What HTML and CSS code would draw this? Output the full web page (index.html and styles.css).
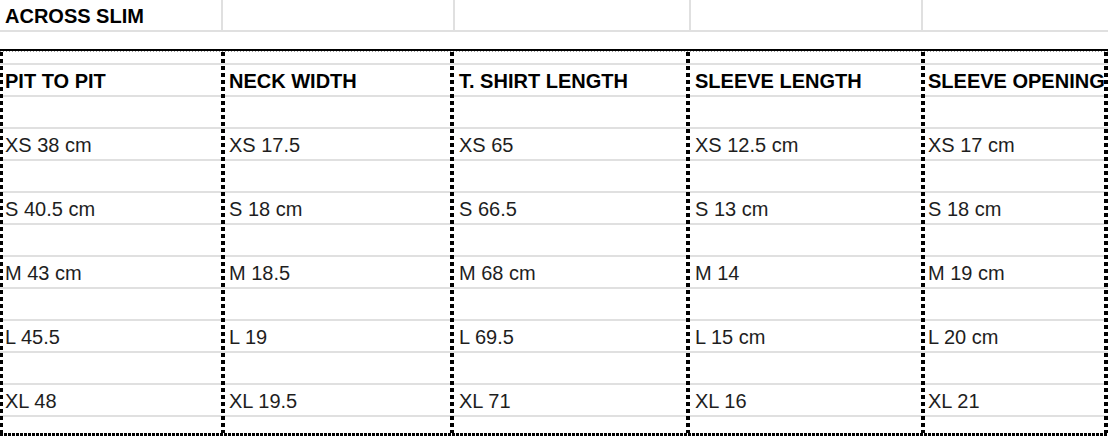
FILE: index.html
```html
<!DOCTYPE html>
<html>
<head>
<meta charset="utf-8">
<link rel="stylesheet" href="styles.css">
</head>
<body>
<div class="sheet">
  <div class="title-row">
    <div class="tcell t1">ACROSS SLIM</div>
    <div class="tcell t2"></div>
    <div class="tcell t3"></div>
    <div class="tcell t4"></div>
    <div class="tcell t5"></div>
  </div>
  <div class="gap"></div>
  <div class="table">
    <div class="top-rule"></div>
    <div class="cols">
      <div class="col c1">
        <div class="cell spacer"></div>
        <div class="cell head">PIT TO PIT</div>
        <div class="cell"></div>
        <div class="cell">XS 38 cm</div>
        <div class="cell"></div>
        <div class="cell">S 40.5 cm</div>
        <div class="cell"></div>
        <div class="cell">M 43 cm</div>
        <div class="cell"></div>
        <div class="cell">L 45.5</div>
        <div class="cell"></div>
        <div class="cell">XL 48</div>
        <div class="cell foot"></div>
      </div>
      <div class="col c2">
        <div class="cell spacer"></div>
        <div class="cell head">NECK WIDTH</div>
        <div class="cell"></div>
        <div class="cell">XS 17.5</div>
        <div class="cell"></div>
        <div class="cell">S 18 cm</div>
        <div class="cell"></div>
        <div class="cell">M 18.5</div>
        <div class="cell"></div>
        <div class="cell">L 19</div>
        <div class="cell"></div>
        <div class="cell">XL 19.5</div>
        <div class="cell foot"></div>
      </div>
      <div class="col c3">
        <div class="cell spacer"></div>
        <div class="cell head">T. SHIRT LENGTH</div>
        <div class="cell"></div>
        <div class="cell">XS 65</div>
        <div class="cell"></div>
        <div class="cell">S 66.5</div>
        <div class="cell"></div>
        <div class="cell">M 68 cm</div>
        <div class="cell"></div>
        <div class="cell">L 69.5</div>
        <div class="cell"></div>
        <div class="cell">XL 71</div>
        <div class="cell foot"></div>
      </div>
      <div class="col c4">
        <div class="cell spacer"></div>
        <div class="cell head">SLEEVE LENGTH</div>
        <div class="cell"></div>
        <div class="cell">XS 12.5 cm</div>
        <div class="cell"></div>
        <div class="cell">S 13 cm</div>
        <div class="cell"></div>
        <div class="cell">M 14</div>
        <div class="cell"></div>
        <div class="cell">L 15 cm</div>
        <div class="cell"></div>
        <div class="cell">XL 16</div>
        <div class="cell foot"></div>
      </div>
      <div class="col c5">
        <div class="cell spacer"></div>
        <div class="cell head">SLEEVE OPENING</div>
        <div class="cell"></div>
        <div class="cell">XS 17 cm</div>
        <div class="cell"></div>
        <div class="cell">S 18 cm</div>
        <div class="cell"></div>
        <div class="cell">M 19 cm</div>
        <div class="cell"></div>
        <div class="cell">L 20 cm</div>
        <div class="cell"></div>
        <div class="cell">XL 21</div>
        <div class="cell foot"></div>
      </div>
    </div>
    <div class="bottom-rule"></div>
  </div>
</div>
</body>
</html>
```
FILE: styles.css
```css
html, body {
  margin: 0;
  padding: 0;
  background: #fff;
}
body {
  font-family: "Liberation Sans", Arial, sans-serif;
  font-size: 20px;
  color: #1e1e1e;
  width: 1108px;
  height: 438px;
  overflow: hidden;
}
.sheet {
  display: flex;
  flex-direction: column;
  width: 1108px;
}
.title-row {
  display: flex;
  height: 32px;
  border-bottom: 2px solid #e0e0e0;
  box-sizing: border-box;
}
.tcell {
  box-sizing: border-box;
  height: 30px;
  border-right: 2px solid #e0e0e0;
  display: flex;
  align-items: flex-end;
  padding-bottom: 2px;
  white-space: nowrap;
}
.t1 { width: 223px; padding-left: 5px; font-weight: bold; color: #000; }
.t2 { width: 232px; }
.t3 { width: 236px; }
.t4 { width: 232px; }
.t5 { flex: 1; border-right: none; }
.gap {
  height: 17px;
}
.table {
  display: flex;
  flex-direction: column;
}
.top-rule {
  height: 3px;
  background:
    linear-gradient(#000, #000) top left / 100% 2px no-repeat,
    repeating-linear-gradient(90deg, #9a9a9a 0 1px, transparent 1px 3px) bottom left / 100% 1px no-repeat;
}
.cols {
  display: flex;
}
.col {
  position: relative;
  display: flex;
  flex-direction: column;
  box-sizing: border-box;
}
.col::before {
  content: "";
  position: absolute;
  left: 0;
  top: 0;
  bottom: 0;
  width: 4px;
  background: repeating-linear-gradient(to bottom, #000 0 4px, transparent 4px 7px);
}
.c1::before { width: 3px; }
.c5::after {
  content: "";
  position: absolute;
  right: 0;
  top: 0;
  bottom: 0;
  width: 4px;
  background: repeating-linear-gradient(to bottom, #000 0 4px, transparent 4px 7px);
}
.c1 { width: 221px; }
.c2 { width: 229px; }
.c3 { width: 236px; }
.c4 { width: 235px; }
.c5 { width: 187px; }
.cell {
  box-sizing: border-box;
  height: 32px;
  border-bottom: 2px solid #e0e0e0;
  display: flex;
  align-items: flex-end;
  padding-bottom: 3px;
  white-space: nowrap;
  line-height: 22px;
}
.c1 .cell { padding-left: 5px; }
.c2 .cell { padding-left: 8px; }
.c3 .cell { padding-left: 9px; }
.c4 .cell { padding-left: 9px; }
.c5 .cell { padding-left: 7px; }
.cell.spacer {
  height: 13px;
}
.cell.head {
  font-weight: bold;
  color: #000;
}
.cell.foot {
  height: 16px;
  border-bottom: none;
}
.bottom-rule {
  height: 3px;
  background: repeating-linear-gradient(90deg, #000 0 3px, transparent 3px 4px);
}
```
